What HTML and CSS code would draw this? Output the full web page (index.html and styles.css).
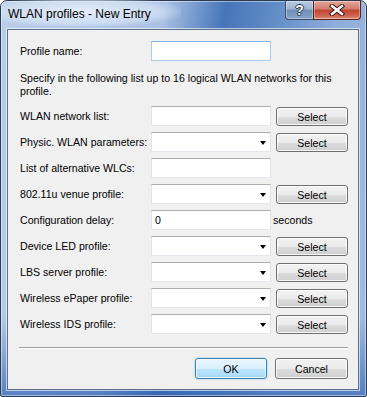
FILE: index.html
```html
<!DOCTYPE html>
<html>
<head>
    <title>WLAN profiles - New Entry</title>
    <link rel="stylesheet" href="styles.css">
</head>
<body>
    <div class="window">
        <div class="titlebar">
            <span class="title">WLAN profiles - New Entry</span>
            <div class="caption-btns">
                <div class="cap-btn help">?</div>
                <div class="cap-btn close">
                    <svg width="16" height="12" viewBox="0 0 16 12">
                        <path d="M3 2 L13 10 M13 2 L3 10" stroke="#3a1a14" stroke-width="4.4" stroke-linecap="square" fill="none"/>
                        <path d="M3 2 L13 10 M13 2 L3 10" stroke="#fff" stroke-width="2.4" stroke-linecap="square" fill="none"/>
                    </svg>
                </div>
            </div>
        </div>

        <div class="client">
            <div class="grid">
                <label>Profile name:</label>
                <div class="input focus"></div>
            </div>

            <p class="note">Specify in the following list up to 16 logical WLAN networks for this profile.</p>

            <!-- Danh sách các trường -->
            <div class="grid rows">
                <label>WLAN network list:</label>
                <div class="input"></div>
                <button class="btn select">Select</button>

                <label>Physic. WLAN parameters:</label>
                <div class="input combo"><span class="arrow"></span></div>
                <button class="btn select">Select</button>

                <label>List of alternative WLCs:</label>
                <div class="input"></div>
                <span></span>

                <label>802.11u venue profile:</label>
                <div class="input combo"><span class="arrow"></span></div>
                <button class="btn select">Select</button>

                <label>Configuration delay:</label>
                <div class="input">0</div>
                <span class="unit">seconds</span>

                <label>Device LED profile:</label>
                <div class="input combo"><span class="arrow"></span></div>
                <button class="btn select">Select</button>

                <label>LBS server profile:</label>
                <div class="input combo"><span class="arrow"></span></div>
                <button class="btn select">Select</button>

                <label>Wireless ePaper profile:</label>
                <div class="input combo"><span class="arrow"></span></div>
                <button class="btn select">Select</button>

                <label>Wireless IDS profile:</label>
                <div class="input combo"><span class="arrow"></span></div>
                <button class="btn select">Select</button>
            </div>

            <div class="sep"></div>

            <div class="actions">
                <button class="btn default">OK</button>
                <button class="btn">Cancel</button>
            </div>
        </div>
    </div>
</body>
</html>
```

FILE: styles.css
```css
body { margin: 0; background: #fff; font-family: "Liberation Sans", Arial, sans-serif; }

.window {
    width: 367px;
    height: 397px;
    box-sizing: border-box;
    border: 1px solid #2c3b52;
    border-radius: 7px 7px 2px 2px;
    display: flex;
    flex-direction: column;
    background:
        linear-gradient(180deg, rgba(60,110,190,0) 0%, rgba(60,110,190,0) 80%, rgba(50,100,180,0.7) 100%),
        linear-gradient(100deg, #b9cde9 0%, #a9c1e3 38%, #4675b9 52%, #5e89c5 62%, #8eaed9 78%, #a4bfe2 100%);
    box-shadow: inset 0 0 0 1px rgba(255,255,255,0.45);
}

.titlebar {
    height: 28px;
    display: flex;
    justify-content: space-between;
    align-items: flex-start;
}
.title {
    font-size: 12px;
    color: #000;
    padding: 10px 30px 6px 7px;
    margin-top: -4px;
    line-height: 14px;
    background: radial-gradient(ellipse at 45% 50%, rgba(235,242,252,0.9) 0%, rgba(220,232,248,0.6) 55%, rgba(220,232,248,0) 75%);
}

.caption-btns { display: flex; margin-right: 5px; }
.cap-btn {
    height: 19px;
    box-sizing: border-box;
    border: 1px solid #3b4f6b;
    border-top: none;
    display: flex;
    align-items: center;
    justify-content: center;
    box-shadow: inset 0 0 0 1px rgba(255,255,255,0.35);
}
.help {
    width: 28px;
    border-radius: 0 0 0 4px;
    border-right: none;
    background: linear-gradient(180deg, #b7c9e1 0%, #9fb5d3 45%, #6f8db5 50%, #86a4c9 100%);
    color: #fff;
    font-weight: bold;
    font-size: 14px;
    text-shadow: 1px 0 #233246, -1px 0 #233246, 0 1px #233246, 0 -1px #233246;
}
.close {
    width: 48px;
    border-radius: 0 0 4px 0;
    border-color: #5a2320;
    background: linear-gradient(180deg, #e4a59b 0%, #d27d6e 45%, #c0422f 50%, #cf6a55 85%, #e0957f 100%);
}

.client {
    flex: 1;
    margin: 0 7px 6px 6px;
    border: 1px solid #5a708e;
    background: #f0f0f0;
    padding: 11px 10px 0 12px;
    font-size: 10.6px;
    color: #000;
    box-shadow: 0 0 0 1px rgba(255,255,255,0.6);
}

.grid {
    display: grid;
    grid-template-columns: 131px 120px 77px;
    grid-auto-rows: 20px;
    align-items: center;
}
.grid label { white-space: nowrap; }
.rows { row-gap: 6px; margin-top: 8px; }

.note { margin: 11px 0 0; line-height: 13px; }

.input {
    height: 20px;
    box-sizing: border-box;
    background: #fff;
    border: 1px solid #e2e3ea;
    border-top-color: #abadb3;
    border-bottom-color: #e3e9ef;
    position: relative;
    padding: 3px 3px;
    line-height: 13px;
}
.input.focus { border-color: #a9cbee; border-top-color: #7eb4ea; }

.arrow {
    position: absolute;
    right: 4px;
    top: 8px;
    width: 0;
    height: 0;
    border-left: 3.5px solid transparent;
    border-right: 3.5px solid transparent;
    border-top: 4px solid #000;
}

.unit { padding-left: 2px; }

.btn {
    font-family: "Liberation Sans", Arial, sans-serif;
    font-size: 10.6px;
    color: #000;
    border: 1px solid #707070;
    border-radius: 3px;
    background: linear-gradient(180deg, #f2f2f2 0%, #ebebeb 50%, #dddddd 51%, #cfcfcf 100%);
    box-shadow: inset 0 0 0 1px rgba(255,255,255,0.8);
    padding: 0;
    height: 21px;
    width: 73px;
}
.select { height: 19px; width: 72px; margin-top: 1px; justify-self: end; }

.sep {
    margin: 13px 0 0 -1px;
    border-top: 1px solid #a0a0a0;
    border-bottom: 1px solid #fff;
}

.actions {
    display: flex;
    justify-content: flex-end;
    gap: 8px;
    margin-top: 9px;
}
.default {
    width: 72px;
    border-color: #3c7fb1;
    background: linear-gradient(180deg, #eaf6fd 0%, #d9f0fc 50%, #bee6fd 51%, #a7d9f5 100%);
    box-shadow: inset 0 0 0 1px rgba(255,255,255,0.7), 0 0 2px #7bc3ef;
}
```
